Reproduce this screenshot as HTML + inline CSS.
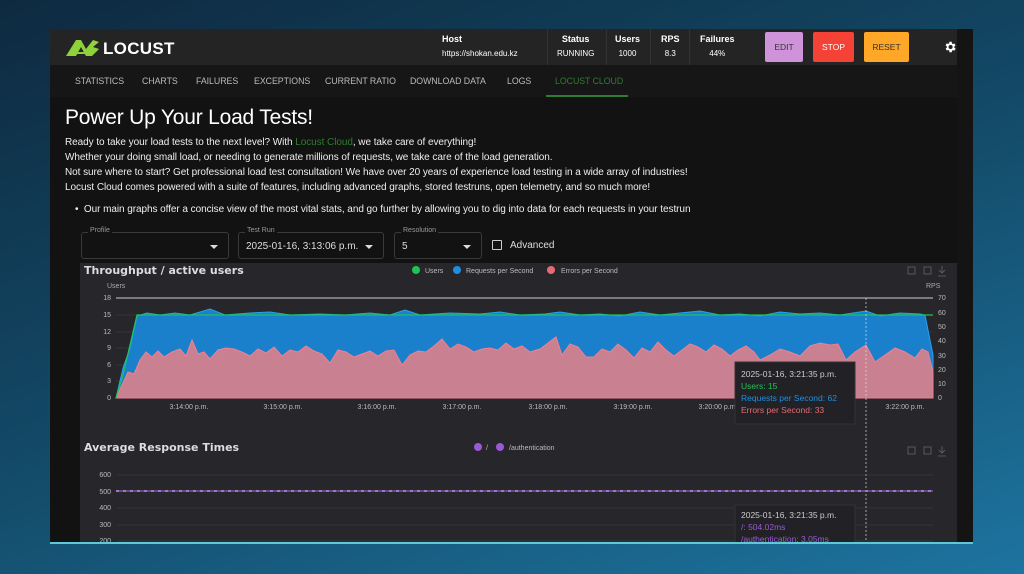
<!DOCTYPE html>
<html><head><style>
*{margin:0;padding:0;box-sizing:border-box}
body{width:1024px;height:574px;overflow:hidden;font-family:"Liberation Sans",sans-serif;background:linear-gradient(160deg,#0e2a40 0%,#134a68 50%,#1d74a0 100%);position:relative}
#frame{position:absolute;left:50px;top:29px;width:923px;height:515px;background:#121212;overflow:hidden;border-bottom:2px solid #5cc8d8}
#hdr{position:absolute;left:0;top:0;width:923px;height:36px;background:#242424;color:#fff}
#nav{position:absolute;left:0;top:36px;width:923px;height:32px;background:#161616}
.nav{position:absolute;top:11px;font-size:8.8px;color:#bbb;letter-spacing:-.05px}
.st{position:absolute;top:5px;font-size:9px;font-weight:bold;text-align:center}
.st div{font-weight:normal;font-size:8px;margin-top:5px}
.sep{position:absolute;top:0;width:1px;height:36px;background:#333}
.btn{position:absolute;top:3px;height:30px;font-size:8.5px;display:flex;align-items:center;justify-content:center;border-radius:2px}
p.t{font-size:10px;color:#eee;line-height:15px;letter-spacing:-.06px}
.sel{position:absolute;top:203px;height:27px;border:1px solid #3a3a3a;border-radius:3px;font-size:10px;color:#ddd}
.sel span.l{position:absolute;top:-6px;left:6px;background:#121212;font-size:7px;color:#999;padding:0 2px}
.sel .a{position:absolute;right:10px;top:12px;border-left:4px solid transparent;border-right:4px solid transparent;border-top:4px solid #ddd}
</style></head><body>
<div id="frame">
 <div id="hdr">
  <svg style="position:absolute;left:16px;top:10px" width="33" height="17" viewBox="0 0 33 17"><path d="M0 17 L10 1 L15 1 L20 10 L27 1 L33 3 L27 8 L33 10 L26 17 L20 17 L15 8 L10 17 Z M5 13 L22 13 L22 15 L5 15Z" fill="#8fd13a"/></svg>
  <div style="position:absolute;left:53px;top:10px;font-size:17px;font-weight:bold;letter-spacing:.3px">LOCUST</div>
  <div class="st" style="left:392px;text-align:left">Host<div>https://shokan.edu.kz</div></div>
  <div class="sep" style="left:497px"></div>
  <div class="st" style="left:507px">Status<div>RUNNING</div></div>
  <div class="sep" style="left:556px"></div>
  <div class="st" style="left:565px">Users<div>1000</div></div>
  <div class="sep" style="left:600px"></div>
  <div class="st" style="left:611px">RPS<div>8.3</div></div>
  <div class="sep" style="left:639px"></div>
  <div class="st" style="left:650px">Failures<div>44%</div></div>
  <div class="btn" style="left:715px;width:38px;background:#ce93d8;color:#333">EDIT</div>
  <div class="btn" style="left:763px;width:41px;background:#f44336;color:#fff">STOP</div>
  <div class="btn" style="left:814px;width:45px;background:#ffa726;color:#333">RESET</div>
  <svg style="position:absolute;left:893px;top:11px" width="14" height="14" viewBox="0 0 24 24"><path fill="#fff" d="M19.4 13a7.5 7.5 0 000-2l2.1-1.6-2-3.5-2.5 1a7.3 7.3 0 00-1.7-1L15 3h-4l-.4 2.7a7.3 7.3 0 00-1.7 1l-2.5-1-2 3.5L6.6 11a7.5 7.5 0 000 2l-2.1 1.6 2 3.5 2.5-1c.5.4 1.1.7 1.7 1L11 21h4l.4-2.7c.6-.3 1.2-.6 1.7-1l2.5 1 2-3.5zM13 15.5a3.5 3.5 0 110-7 3.5 3.5 0 010 7z"/></svg>
 </div>
 <div id="nav">
  <div class="nav" style="left:25px">STATISTICS</div>
  <div class="nav" style="left:92px">CHARTS</div>
  <div class="nav" style="left:146px">FAILURES</div>
  <div class="nav" style="left:204px">EXCEPTIONS</div>
  <div class="nav" style="left:275px">CURRENT RATIO</div>
  <div class="nav" style="left:360px">DOWNLOAD DATA</div>
  <div class="nav" style="left:457px">LOGS</div>
  <div class="nav" style="left:505px;color:#2e7d32">LOCUST CLOUD</div>
  <div style="position:absolute;left:496px;top:30px;width:82px;height:2px;background:#2e7d32"></div>
 </div>
 <div style="position:absolute;left:15px;top:77px;font-size:21px;color:#fff;letter-spacing:-.2px">Power Up Your Load Tests!</div>
 <div style="position:absolute;left:15px;top:106px">
  <p class="t">Ready to take your load tests to the next level? With <span style="color:#2e7d32">Locust Cloud</span>, we take care of everything!</p>
  <p class="t">Whether your doing small load, or needing to generate millions of requests, we take care of the load generation.</p>
  <p class="t">Not sure where to start? Get professional load test consultation! We have over 20 years of experience load testing in a wide array of industries!</p>
  <p class="t">Locust Cloud comes powered with a suite of features, including advanced graphs, stored testruns, open telemetry, and so much more!</p>
  <p class="t" style="margin-top:7px;padding-left:10px">• &nbsp;Our main graphs offer a concise view of the most vital stats, and go further by allowing you to dig into data for each requests in your testrun</p>
 </div>
 <div class="sel" style="left:31px;width:148px"><span class="l">Profile</span><div class="a"></div></div>
 <div class="sel" style="left:188px;width:146px"><span class="l">Test Run</span><span style="position:absolute;left:7px;top:8px">2025-01-16, 3:13:06 p.m.</span><div class="a"></div></div>
 <div class="sel" style="left:344px;width:88px"><span class="l">Resolution</span><span style="position:absolute;left:7px;top:8px">5</span><div class="a"></div></div>
 <div style="position:absolute;left:442px;top:211px;width:10px;height:10px;border:1.5px solid #ccc;border-radius:1px"></div>
 <div style="position:absolute;left:460px;top:211px;font-size:10px;color:#ddd">Advanced</div>
 <div style="position:absolute;left:907px;top:0;width:16px;height:515px;background:#141414"></div>
</div>
<svg style="position:absolute;left:0;top:0" width="1024" height="544" viewBox="0 0 1024 544" font-family="Liberation Sans,DejaVu Sans,sans-serif">
 <rect x="80" y="263" width="877" height="281" fill="#27262b"/>
 <text x="84" y="274" font-size="11" font-weight="bold" fill="#ddd" font-family="DejaVu Sans,sans-serif">Throughput / active users</text>
 <circle cx="416" cy="270" r="4" fill="#1fc454"/><text x="425" y="273" font-size="7" fill="#bbb">Users</text>
 <circle cx="457" cy="270" r="4" fill="#1e8fe0"/><text x="466" y="273" font-size="7" fill="#bbb">Requests per Second</text>
 <circle cx="551" cy="270" r="4" fill="#e86a74"/><text x="561" y="273" font-size="7" fill="#bbb">Errors per Second</text>
 <g stroke="#666" fill="none" stroke-width=".8"><rect x="908" y="267" width="7" height="7"/><rect x="924" y="267" width="7" height="7"/><path d="M942 266v7M939 270l3 3 3-3M938 276h8"/></g>
 <text x="107" y="288" font-size="7" fill="#aaa">Users</text><text x="926" y="288" font-size="7" fill="#aaa">RPS</text>
 <g stroke="#444" stroke-width=".6"><line x1="116" y1="315" x2="933" y2="315"/><line x1="116" y1="332" x2="933" y2="332"/><line x1="116" y1="348" x2="933" y2="348"/><line x1="116" y1="365" x2="933" y2="365"/><line x1="116" y1="381" x2="933" y2="381"/></g>
 <line x1="116" y1="298" x2="933" y2="298" stroke="#ccc" stroke-width="1"/>
 <g font-size="7" fill="#bbb" text-anchor="end"><text x="111" y="300">18</text><text x="111" y="317">15</text><text x="111" y="334">12</text><text x="111" y="350">9</text><text x="111" y="367">6</text><text x="111" y="383">3</text><text x="111" y="400">0</text></g>
 <g font-size="7" fill="#bbb"><text x="938" y="300">70</text><text x="938" y="315">60</text><text x="938" y="329">50</text><text x="938" y="343">40</text><text x="938" y="358">30</text><text x="938" y="372">20</text><text x="938" y="386">10</text><text x="938" y="400">0</text></g>
 <polygon fill="#1a80cc" stroke="#2aa0f0" stroke-width="1" points="116,398 123,368 130,348 137,316 147,313 160,315 175,313 190,315 210,309 225,315 250,313 270,312 290,315 320,314 345,315 370,313 390,315 405,310 420,315 450,313 480,314 500,312 520,315 545,314 560,312 580,315 600,314 620,316 640,312 660,315 680,313 700,311 720,315 740,314 760,316 780,312 800,314 820,313 840,315 866,311 880,316 900,313 920,314 925,315 933,355 933,398"/>
 <polygon fill="#c98090" stroke="#f08090" stroke-width="1" points="116,398 122,385 128,372 134,374 140,360 146,352 152,357 158,351 164,357 172,352 180,349 186,356 192,340 198,354 204,352 210,359 218,350 226,348 234,349 242,352 250,356 258,349 266,353 274,347 282,356 290,350 298,352 306,346 314,351 322,354 330,363 338,350 346,352 354,357 362,354 370,351 378,356 386,351 394,350 402,365 410,355 418,351 426,352 434,346 442,339 450,349 458,344 466,347 474,352 482,349 490,348 498,350 506,343 514,349 522,346 530,352 540,349 548,343 556,337 562,355 570,344 578,347 586,357 594,357 602,349 610,352 618,344 626,350 634,358 642,348 650,352 658,342 666,350 674,356 682,350 690,344 698,347 706,352 714,345 722,349 730,356 738,350 746,346 754,352 760,360 770,355 780,349 790,352 800,356 810,346 820,343 830,345 838,344 846,360 855,352 866,345 875,362 885,355 895,348 905,352 915,358 922,349 928,352 933,372 933,398"/>
 <polyline fill="none" stroke="#1fc454" stroke-width="1.2" points="116,398 123,375 130,345 137,315 933,315"/>
 <g font-size="7" fill="#bbb" text-anchor="middle"><text x="189" y="409">3:14:00 p.m.</text><text x="283" y="409">3:15:00 p.m.</text><text x="377" y="409">3:16:00 p.m.</text><text x="462" y="409">3:17:00 p.m.</text><text x="548" y="409">3:18:00 p.m.</text><text x="633" y="409">3:19:00 p.m.</text><text x="718" y="409">3:20:00 p.m.</text><text x="905" y="409">3:22:00 p.m.</text></g>
 <line x1="866" y1="298" x2="866" y2="544" stroke="#ddd" stroke-dasharray="2,2" stroke-width=".7"/>
 <rect x="735" y="362" width="120" height="62" fill="#222226" stroke="#333"/>
 <g font-size="8.5"><text x="741" y="377" fill="#ccc">2025-01-16, 3:21:35 p.m.</text><text x="741" y="389" fill="#1fc454">Users: 15</text><text x="741" y="401" fill="#1e8fe0">Requests per Second: 62</text><text x="741" y="413" fill="#e86a74">Errors per Second: 33</text></g>
 <text x="84" y="451" font-size="11" font-weight="bold" fill="#ddd" font-family="DejaVu Sans,sans-serif">Average Response Times</text>
 <circle cx="478" cy="447" r="4" fill="#9b59d6"/><text x="486" y="450" font-size="7" fill="#bbb">/</text>
 <circle cx="500" cy="447" r="4" fill="#9b59d6"/><text x="509" y="450" font-size="7" fill="#bbb">/authentication</text>
 <g stroke="#666" fill="none" stroke-width=".8"><rect x="908" y="447" width="7" height="7"/><rect x="924" y="447" width="7" height="7"/><path d="M942 446v7M939 450l3 3 3-3M938 456h8"/></g>
 <g stroke="#444" stroke-width=".6"><line x1="117" y1="475" x2="933" y2="475"/><line x1="117" y1="508" x2="933" y2="508"/><line x1="117" y1="525" x2="933" y2="525"/><line x1="117" y1="541" x2="933" y2="541"/></g>
 <g font-size="7" fill="#bbb" text-anchor="end"><text x="111" y="477">600</text><text x="111" y="494">500</text><text x="111" y="510">400</text><text x="111" y="527">300</text><text x="111" y="543">200</text></g>
 <line x1="116" y1="491" x2="933" y2="491" stroke="#9b59d6" stroke-width="2" stroke-dasharray="3,4"/>
 <line x1="116" y1="491" x2="933" y2="491" stroke="#b59ae0" stroke-width=".8"/>
 <rect x="735" y="505" width="120" height="40" fill="#222226" stroke="#333"/>
 <g font-size="8.5"><text x="741" y="518" fill="#ccc">2025-01-16, 3:21:35 p.m.</text><text x="741" y="530" fill="#9b59d6">/: 504.02ms</text><text x="741" y="542" fill="#9b59d6">/authentication: 3.05ms</text></g>
 <rect x="50" y="542" width="923" height="2" fill="#5cc8d8"/>
</svg>
</body></html>
